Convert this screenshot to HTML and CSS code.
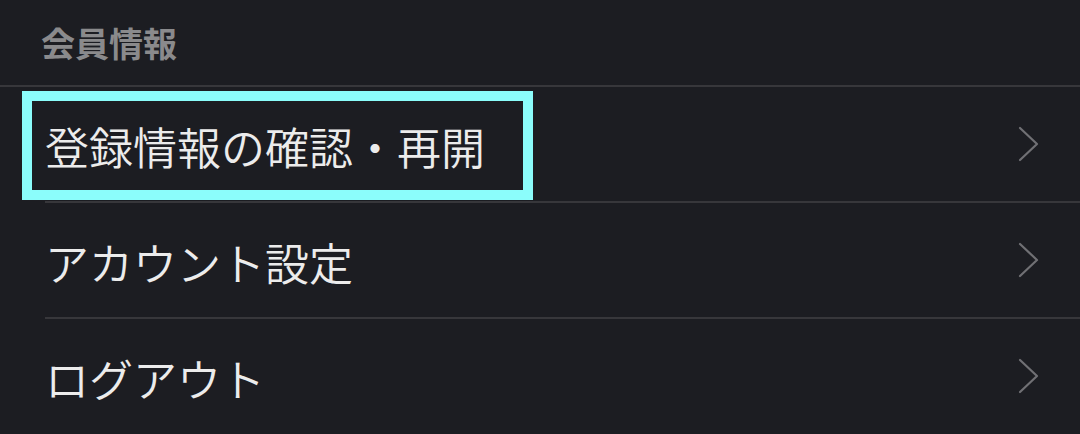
FILE: index.html
```html
<!DOCTYPE html>
<html lang="ja">
<head>
<meta charset="utf-8">
<link rel="stylesheet" href="styles.css">
</head>
<body>
  <div class="section-header">会員情報</div>
  <ul class="menu">
    <li class="menu-item">
      <span class="highlight"></span>
      <span class="label">登録情報の確認・再開</span>
      <svg class="chevron" width="21" height="36" viewBox="0 0 21 36"><polyline points="2,2 19,18 2,34" fill="none" stroke="#707074" stroke-width="2.2" stroke-linecap="round" stroke-linejoin="round"/></svg>
    </li>
    <li class="menu-item">
      <span class="label">アカウント設定</span>
      <svg class="chevron" width="21" height="36" viewBox="0 0 21 36"><polyline points="2,2 19,18 2,34" fill="none" stroke="#707074" stroke-width="2.2" stroke-linecap="round" stroke-linejoin="round"/></svg>
    </li>
    <li class="menu-item">
      <span class="label">ログアウト</span>
      <svg class="chevron" width="21" height="36" viewBox="0 0 21 36"><polyline points="2,2 19,18 2,34" fill="none" stroke="#707074" stroke-width="2.2" stroke-linecap="round" stroke-linejoin="round"/></svg>
    </li>
  </ul>
</body>
</html>
```
FILE: styles.css
```css
html, body {
  margin: 0;
  padding: 0;
  background: #1c1d22;
  font-family: "Noto Sans CJK JP", "Noto Sans", sans-serif;
}

.section-header {
  height: 87px;
  box-sizing: border-box;
  padding: 22px 0 0 41px;
  font-size: 34px;
  font-weight: 700;
  line-height: 42px;
  color: #8a8a8c;
  border-bottom: 2px solid #37373b;
}

.menu {
  list-style: none;
  margin: 0;
  padding: 0 0 0 45px;
}

.menu-item {
  position: relative;
  height: 114px;
  display: flex;
  align-items: center;
  justify-content: space-between;
  padding-right: 41px;
  border-bottom: 2px solid #37373b;
}

.menu-item:last-child {
  border-bottom: none;
}

.label {
  font-size: 44px;
  font-weight: 350;
  color: #ececec;
  line-height: 1;
  padding-top: 3px;
}

.chevron {
  display: block;
}

.highlight {
  position: absolute;
  left: -23px;
  top: 4px;
  width: 511px;
  height: 109px;
  box-sizing: border-box;
  border: 10px solid #8bfdfb;
}
```
